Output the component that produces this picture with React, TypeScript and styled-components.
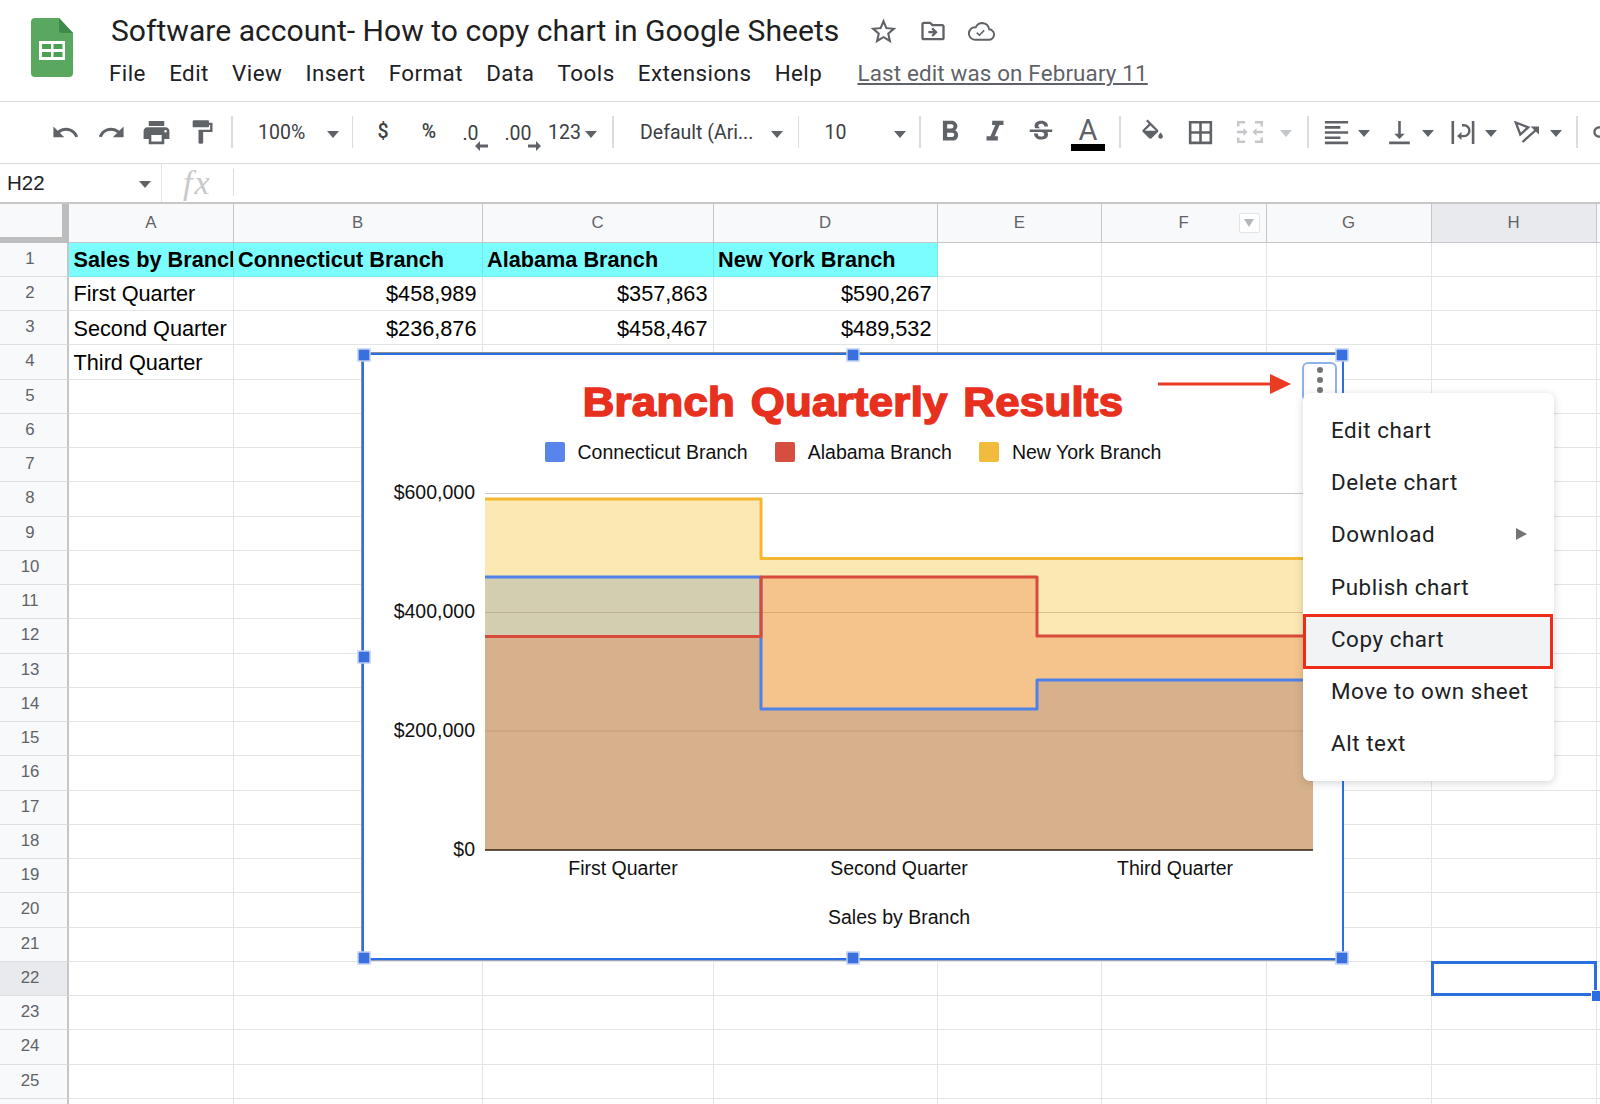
import React from 'react';
import styled, { createGlobalStyle } from 'styled-components';
import {
  MdBorderAll,
  MdFormatAlignLeft,
  MdFormatBold,
  MdFormatItalic,
  MdFormatPaint,
  MdLink,
  MdOutlineDriveFileMove,
  MdPrint,
  MdRedo,
  MdStarBorder,
  MdStrikethroughS,
  MdUndo,
  MdVerticalAlignBottom,
} from 'react-icons/md';

const GlobalStyle = createGlobalStyle`
  html, body {
    margin: 0;
    padding: 0;
    background: #fff;
    overflow: hidden;
  }
  body {
    font-family: "Liberation Sans", Arial, sans-serif;
    color: #000;
  }
`;

const Page = styled.div`
  position: relative;
  width: 1600px;
  height: 1104px;
  overflow: hidden;
  background: #fff;
`;

/* ---------- title bar ---------- */

const TopBar = styled.header`
  box-sizing: border-box;
  height: 101.5px;
  display: flex;
  align-items: flex-start;
  padding: 18px 0 0 31px;
  border-bottom: 1.5px solid #dadce0;
`;

const TitleBlock = styled.div`
  margin-left: 38px;
  display: flex;
  flex-direction: column;
`;

const TitleRow = styled.div`
  display: flex;
  align-items: center;
  height: 26px;
`;

const DocTitle = styled.h1`
  margin: 0;
  font: 400 30.1px/26px "Roboto", sans-serif;
  color: #1f1f1f;
  white-space: nowrap;
`;

const TitleIcons = styled.div`
  display: flex;
  align-items: center;
  margin-left: 29px;
  gap: 20px;
  color: #5f6368;
`;

const MenuRow = styled.nav`
  display: flex;
  align-items: center;
  height: 30px;
  margin: 14px 0 0 -2px;
  gap: 23.2px;
  font: 400 22.4px/30px "Roboto", sans-serif;
  letter-spacing: 0.45px;
  color: #202124;
`;

const LastEdit = styled.a`
  margin-left: 12px;
  color: #5f6368;
  text-decoration: underline;
  letter-spacing: 0.15px;
`;

/* ---------- toolbar ---------- */

const Toolbar = styled.div`
  box-sizing: border-box;
  height: 62px;
  display: flex;
  align-items: center;
  padding-left: 43px;
  border-bottom: 1.5px solid #dadce0;
  color: #5f6368;
  overflow: hidden;
`;

const Slot = styled.div<{ $w: number }>`
  flex: none;
  width: ${p => p.$w}px;
  display: flex;
  align-items: center;
  justify-content: center;
  font: 500 19.5px/26px "Roboto", sans-serif;
  color: #3c4043;
  svg {
    flex: none;
    color: #5f6368;
  }
`;

const Divider = styled.div<{ $w: number }>`
  flex: none;
  width: ${p => p.$w}px;
  height: 32px;
  display: flex;
  justify-content: center;
  &::before {
    content: '';
    width: 1.5px;
    background: #dadce0;
  }
`;

const Dropdown = styled.div<{ $w: number; $pl: number; $pr: number }>`
  flex: none;
  box-sizing: border-box;
  width: ${p => p.$w}px;
  padding: 1px ${p => p.$pr}px 0 ${p => p.$pl}px;
  display: flex;
  align-items: center;
  justify-content: space-between;
  font: 400 19.5px/24px "Roboto", sans-serif;
  color: #3c4043;
  white-space: nowrap;
`;

const Caret = styled.span<{ $muted?: boolean }>`
  flex: none;
  width: 0;
  height: 0;
  margin-top: 3px;
  border-left: 6px solid transparent;
  border-right: 6px solid transparent;
  border-top: 7px solid ${p => (p.$muted ? '#c4c7ca' : '#5f6368')};
`;

const IconGroup = styled.div<{ $gap: number; $ml?: number; $mr?: number }>`
  flex: none;
  display: flex;
  align-items: center;
  gap: ${p => p.$gap}px;
  margin: 0 ${p => p.$mr ?? 0}px 0 ${p => p.$ml ?? 0}px;
  color: #5f6368;
`;

const IconBox = styled.span`
  flex: none;
  width: 24px;
  height: 24px;
  display: flex;
  align-items: center;
  justify-content: center;
  svg {
    flex: none;
  }
`;

const DecimalStack = styled.div`
  display: flex;
  flex-direction: column;
  align-items: flex-end;
  padding-top: 10px;
  font: 400 19.5px/20px "Roboto", sans-serif;
  color: #3c4043;
  svg {
    margin: -3px -9px 0 0;
  }
`;

const ColorA = styled.div`
  display: flex;
  flex-direction: column;
  align-items: center;
  width: 34px;
  font: 400 29px/30px "Roboto", sans-serif;
  color: #5f6368;
  padding-top: 1px;
  &::after {
    content: '';
    width: 34px;
    height: 7px;
    margin-top: -1px;
    background: #000;
  }
`;

/* ---------- formula bar ---------- */

const FormulaBar = styled.div`
  box-sizing: border-box;
  height: 40.5px;
  display: flex;
  align-items: center;
  border-bottom: 2px solid #c8c8c8;
`;

const NameBox = styled.div`
  box-sizing: border-box;
  width: 162px;
  height: 100%;
  padding: 0 10px 0 7px;
  display: flex;
  align-items: center;
  justify-content: space-between;
  font: 400 20.5px/24px "Liberation Sans", sans-serif;
  color: #202124;
  border-right: 1.5px solid #e3e4e6;
`;

const FxLabel = styled.div`
  width: 72px;
  height: 27px;
  box-sizing: border-box;
  padding-left: 21px;
  display: flex;
  align-items: center;
  border-right: 1.5px solid #dadce0;
  font: italic 400 34px/27px "Liberation Serif", serif;
  color: #c9c9c9;
  letter-spacing: 2px;
`;

/* ---------- sheet grid ---------- */

const Sheet = styled.div`
  display: grid;
  grid-template-columns: 69px 164.5px 249px 231px 224px 164.5px 164.5px 165px 165px 1fr;
  grid-template-rows: 38.5px repeat(26, 34.25px);
  height: 900px;
  overflow: hidden;
`;

const Corner = styled.div`
  box-sizing: border-box;
  background: #f8f9fa;
  border-right: 7px solid #bdbdbd;
  border-bottom: 6px solid #bdbdbd;
`;

const ColHead = styled.div<{ $active?: boolean }>`
  position: relative;
  box-sizing: border-box;
  display: flex;
  align-items: center;
  justify-content: center;
  background: ${p => (p.$active ? '#e8eaed' : '#f8f9fa')};
  border-right: 1.5px solid #c4c6c8;
  border-bottom: 1.5px solid #c4c6c8;
  font-size: 16.8px;
  color: #5f6368;
`;

const FilterBadge = styled.span`
  position: absolute;
  right: 6px;
  top: 9px;
  box-sizing: border-box;
  width: 21px;
  height: 20px;
  display: flex;
  align-items: center;
  justify-content: center;
  background: #fff;
  border: 1.5px solid #e3e4e6;
  border-radius: 2px;
  &::before {
    content: '';
    border-left: 5px solid transparent;
    border-right: 5px solid transparent;
    border-top: 8px solid #b4b7ba;
  }
`;

const RowHead = styled.div<{ $active?: boolean }>`
  box-sizing: border-box;
  display: flex;
  align-items: center;
  justify-content: center;
  padding-right: 7px;
  padding-bottom: 1px;
  background: ${p => (p.$active ? '#e8eaed' : '#f8f9fa')};
  border-right: 2px solid #c4c6c8;
  border-bottom: 1.5px solid #dcdddf;
  font-size: 16.8px;
  color: #5f6368;
`;

const Cell = styled.div<{ $right?: boolean; $head?: boolean }>`
  box-sizing: border-box;
  min-width: 0;
  padding: 2px 5px 0 4.5px;
  display: flex;
  align-items: center;
  justify-content: ${p => (p.$right ? 'flex-end' : 'flex-start')};
  overflow: hidden;
  white-space: nowrap;
  font-size: 21.7px;
  font-weight: ${p => (p.$head ? 700 : 400)};
  background: ${p => (p.$head ? '#7cfdfd' : '#fff')};
  border-right: 1.5px solid ${p => (p.$head ? '#72e8e9' : '#e3e4e5')};
  border-bottom: 1.5px solid ${p => (p.$head ? '#72e8e9' : '#e3e4e5')};
`;

const CellSelection = styled.div`
  position: absolute;
  left: 1431px;
  top: 961px;
  box-sizing: border-box;
  width: 166px;
  height: 35px;
  border: 3px solid #2a6fe0;
  &::after {
    content: '';
    position: absolute;
    right: -9px;
    bottom: -9px;
    width: 10px;
    height: 10px;
    background: #2a6fe0;
    border: 1px solid #fff;
  }
`;

/* ---------- chart ---------- */

const ChartFrame = styled.section`
  position: absolute;
  left: 362px;
  top: 353px;
  box-sizing: border-box;
  width: 982px;
  height: 607px;
  padding-top: 22px;
  background: #fff;
  border: 2px solid #2a70e4;
  box-shadow: -1px -1px 0 #8f8f8f, 0 1px 0 #9aa5bd;
`;

const Handle = styled.span<{ $x: number; $y: number }>`
  position: absolute;
  left: ${p => p.$x}%;
  top: ${p => p.$y}%;
  box-sizing: border-box;
  width: 13px;
  height: 13px;
  transform: translate(-50%, -50%);
  background: #3a6fe0;
  border: 1px solid #fff;
`;

const ChartTitle = styled.h2`
  margin: 0;
  height: 50px;
  text-align: center;
  font: 700 41px/50px "Liberation Sans", sans-serif;
  color: #e8301f;
  -webkit-text-stroke: 1.6px #e8301f;
  letter-spacing: 0.3px;
  word-spacing: 3px;
  white-space: nowrap;
  transform: scaleX(1.065);
`;

const Legend = styled.div`
  height: 20px;
  margin-top: 15px;
  display: flex;
  justify-content: center;
  gap: 27px;
  font-size: 19.5px;
  line-height: 20px;
  color: #111;
`;

const LegendItem = styled.div`
  display: flex;
  align-items: center;
  gap: 13px;
`;

const Swatch = styled.span<{ $color: string }>`
  width: 20px;
  height: 20px;
  border-radius: 2px;
  background: ${p => p.$color};
`;

const PlotSvg = styled.svg`
  display: block;
  margin-top: 13px;
  width: 977px;
  height: 482px;
  text {
    font-family: "Liberation Sans", sans-serif;
    font-size: 19.5px;
    fill: #111;
  }
`;

const MoreButton = styled.div`
  position: absolute;
  right: 5px;
  top: 7px;
  box-sizing: border-box;
  width: 35px;
  height: 40px;
  padding-top: 3px;
  display: flex;
  flex-direction: column;
  align-items: center;
  gap: 4px;
  border: 2.5px solid #8fb2ea;
  border-radius: 6px;
  background: #fff;
  span {
    width: 6px;
    height: 6px;
    border-radius: 50%;
    background: #757575;
  }
`;

const RedArrow = styled.svg`
  position: absolute;
  left: 794px;
  top: 17px;
  width: 134px;
  height: 24px;
`;

/* ---------- chart menu ---------- */

const ChartMenu = styled.ul`
  position: absolute;
  left: 1303px;
  top: 393px;
  box-sizing: border-box;
  width: 251px;
  height: 388px;
  margin: 0;
  padding: 11px 0;
  list-style: none;
  background: #fff;
  border-radius: 7px;
  box-shadow: 0 2px 9px rgba(60, 64, 67, 0.22);
  isolation: isolate;
`;

const MenuItem = styled.li<{ $copy?: boolean }>`
  position: relative;
  height: 52.2px;
  padding: 0 27px 0 28px;
  display: flex;
  align-items: center;
  justify-content: space-between;
  font: 400 22.4px/30px "Roboto", sans-serif;
  letter-spacing: 0.55px;
  color: #202124;
  white-space: nowrap;
  ${p =>
    p.$copy &&
    `
    &::before {
      content: '';
      position: absolute;
      z-index: -1;
      inset: 1px 1px -4px 0;
      background: #f1f3f4;
      border: 3px solid #ee2c17;
    }
  `}
`;

const SubArrow = styled.span`
  width: 0;
  height: 0;
  border-top: 6px solid transparent;
  border-bottom: 6px solid transparent;
  border-left: 11px solid #757575;
`;

/* ---------- data ---------- */

const columns = ['A', 'B', 'C', 'D', 'E', 'F', 'G', 'H', ''];

const rows: Record<number, { text: string; right?: boolean; head?: boolean }[]> = {
  1: [
    { text: 'Sales by Branch', head: true },
    { text: 'Connecticut Branch', head: true },
    { text: 'Alabama Branch', head: true },
    { text: 'New York Branch', head: true },
  ],
  2: [
    { text: 'First Quarter' },
    { text: '$458,989', right: true },
    { text: '$357,863', right: true },
    { text: '$590,267', right: true },
  ],
  3: [
    { text: 'Second Quarter' },
    { text: '$236,876', right: true },
    { text: '$458,467', right: true },
    { text: '$489,532', right: true },
  ],
  4: [{ text: 'Third Quarter' }],
};

const PLOT_LEFT = 485;
const PLOT_RIGHT = 1313;
const STEP_A = 761;
const STEP_B = 1037;
const BASE_Y = 850;

const series = [
  { name: 'Connecticut Branch', color: '#4285f4', line: '#4f81e8', swatch: '#5884ec', fill: 0.3, ys: [577, 709, 680] },
  { name: 'Alabama Branch', color: '#db4437', line: '#d84a3b', swatch: '#d64f3e', fill: 0.27, ys: [636.5, 577, 636] },
  { name: 'New York Branch', color: '#f4b400', line: '#f3b733', swatch: '#f3bb3e', fill: 0.3, ys: [499, 558.5, 558.5] },
];

const stepLine = (ys: number[]) =>
  `M${PLOT_LEFT} ${ys[0]}H${STEP_A}V${ys[1]}H${STEP_B}V${ys[2]}H${PLOT_RIGHT}`;

const yTicks = [
  { label: '$600,000', y: 493.5 },
  { label: '$400,000', y: 612.5 },
  { label: '$200,000', y: 731 },
  { label: '$0', y: 850 },
];

const xTicks = [
  { label: 'First Quarter', x: 623 },
  { label: 'Second Quarter', x: 899 },
  { label: 'Third Quarter', x: 1175 },
];

const menuItems = ['Edit chart', 'Delete chart', 'Download', 'Publish chart', 'Copy chart', 'Move to own sheet', 'Alt text'];

const handles = [
  [0, 0],
  [50, 0],
  [100, 0],
  [0, 50],
  [0, 100],
  [50, 100],
  [100, 100],
];

/* ---------- drawn icons ---------- */

const SheetsLogo = () => (
  <svg width="42" height="59" viewBox="0 0 42 59">
    <path d="M4 0h24l14 15v40a4 4 0 0 1-4 4H4a4 4 0 0 1-4-4V4a4 4 0 0 1 4-4z" fill="#5aa85f" />
    <path d="M28 0l14 15H31a3 3 0 0 1-3-3z" fill="#3f8a4a" />
    <path d="M8 23h26v19H8z" fill="#fff" />
    <path d="M11 26h9v5h-9zM22.5 26h9v5h-9zM11 34h9v5h-9zM22.5 34h9v5h-9z" fill="#4ba052" />
  </svg>
);

const CloudCheck = () => (
  <svg width="28" height="20" viewBox="0 0 28 20" fill="none" stroke="#5f6368" strokeWidth="1.9">
    <path d="M8 18.7h13.5a5.2 5.2 0 0 0 .7-10.4A7.6 7.6 0 0 0 15.3 2c-3 0-5.4 1.7-6.5 4.3h-.6a6.2 6.2 0 0 0-.2 12.4z" />
    <path d="M9.8 11.6l2.6 2.6 4.8-4.8" strokeWidth="1.6" />
  </svg>
);

const ArrowGlyph = ({ left }: { left?: boolean }) => (
  <svg width="13" height="10" viewBox="0 0 13 10" fill="#5f6368">
    <path d={left ? 'M0 5l5-5v3.6h8v2.8H5V10z' : 'M13 5L8 0v3.6H0v2.8h8V10z'} />
  </svg>
);

const MergeIcon = () => (
  <svg width="26" height="22" viewBox="0 0 26 22" fill="#c4c7ca">
    <path d="M0 0h8v2.5H2.5v3H0zM18 0h8v5.5h-2.5v-3H18zM0 16.5h2.5v3H8V22H0zM23.5 16.5H26V22h-8v-2.5h5.5z" />
    <path d="M0 9.8h6.5V7l4 4-4 4v-2.8H0zM26 9.8h-6.5V7l-4 4 4 4v-2.8H26z" />
  </svg>
);

const WrapIcon = () => (
  <svg width="24" height="23" viewBox="0 0 24 23" fill="#5f6368">
    <path d="M0.5 0h2.6v23H0.5zM20.8 0h2.6v23h-2.6z" />
    <path d="M11 5.5h2a4.2 4.2 0 0 1 0 8.4h-2.5V11L6 15l4.5 4v-2.7H13a6.6 6.6 0 0 0 0-13.2h-2z" />
  </svg>
);

const RotateIcon = () => (
  <svg width="26" height="22" viewBox="0 0 26 22" fill="none" stroke="#5f6368" strokeWidth="2.3">
    <path d="M1.8 1.5l4.5 12 8-7.2z" />
    <path d="M8.5 21L23 8" />
    <path d="M16.5 5.5H25v8z" fill="#5f6368" stroke="none" />
  </svg>
);

const FillIcon = () => (
  <svg width="25" height="26" viewBox="0 0 22 22" fill="#5f6368">
    <path d="M16.56 8.94L7.62 0 6.21 1.41l2.38 2.38-5.15 5.15c-.59.59-.59 1.54 0 2.12l5.5 5.5c.29.29.68.44 1.06.44s.77-.15 1.06-.44l5.5-5.5c.59-.58.59-1.53 0-2.12zM5.21 10L10 5.21 14.79 10H5.21zM19 11.5s-2 2.17-2 3.5c0 1.1.9 2 2 2s2-.9 2-2c0-1.33-2-3.5-2-3.5z" />
  </svg>
);

/* ---------- page ---------- */

const App = () => (
  <Page>
    <GlobalStyle />

    <TopBar>
      <SheetsLogo />
      <TitleBlock>
        <TitleRow>
          <DocTitle>Software account- How to copy chart in Google Sheets</DocTitle>
          <TitleIcons>
            <MdStarBorder size={31} />
            <MdOutlineDriveFileMove size={28} />
            <CloudCheck />
          </TitleIcons>
        </TitleRow>
        <MenuRow>
          {['File', 'Edit', 'View', 'Insert', 'Format', 'Data', 'Tools', 'Extensions', 'Help'].map(item => (
            <span key={item}>{item}</span>
          ))}
          <LastEdit>Last edit was on February 11</LastEdit>
        </MenuRow>
      </TitleBlock>
    </TopBar>

    <Toolbar>
      <Slot $w={45}><MdUndo size={29} /></Slot>
      <Slot $w={46}><MdRedo size={29} /></Slot>
      <Slot $w={45}><MdPrint size={31} /></Slot>
      <Slot $w={46}><MdFormatPaint size={28} /></Slot>
      <Divider $w={14} />
      <Dropdown $w={107} $pl={19} $pr={7.5}>100%<Caret /></Dropdown>
      <Divider $w={13} />
      <Slot $w={48}>$</Slot>
      <Slot $w={44}>%</Slot>
      <Slot $w={39}>
        <DecimalStack>.0<ArrowGlyph left /></DecimalStack>
      </Slot>
      <Slot $w={56}>
        <DecimalStack>.00<ArrowGlyph /></DecimalStack>
      </Slot>
      <Dropdown $w={60} $pl={2} $pr={9}>123<Caret /></Dropdown>
      <Divider $w={14} />
      <Dropdown $w={172} $pl={20} $pr={9}>Default (Ari...<Caret /></Dropdown>
      <Divider $w={13} />
      <Dropdown $w={108} $pl={19.5} $pr={7.5}>10<Caret /></Dropdown>
      <Divider $w={14} />
      <Slot $w={45}><MdFormatBold size={34} /></Slot>
      <Slot $w={46}><MdFormatItalic size={34} /></Slot>
      <Slot $w={46}><MdStrikethroughS size={30} /></Slot>
      <Slot $w={48}><ColorA>A</ColorA></Slot>
      <Divider $w={16} />
      <Slot $w={47}><FillIcon /></Slot>
      <Slot $w={51}><MdBorderAll size={31} /></Slot>
      <IconGroup $gap={18} $ml={12}>
        <IconBox><MergeIcon /></IconBox>
        <Caret $muted />
      </IconGroup>
      <Divider $w={32} />
      <IconGroup $gap={10} $mr={17.5}>
        <IconBox><MdFormatAlignLeft size={31} /></IconBox>
        <Caret />
      </IconGroup>
      <IconGroup $gap={10} $mr={17.5}>
        <IconBox><MdVerticalAlignBottom size={31} /></IconBox>
        <Caret />
      </IconGroup>
      <IconGroup $gap={10} $mr={17.5}>
        <IconBox><WrapIcon /></IconBox>
        <Caret />
      </IconGroup>
      <IconGroup $gap={11}>
        <IconBox><RotateIcon /></IconBox>
        <Caret />
      </IconGroup>
      <Divider $w={31} />
      <IconBox><MdLink size={28} /></IconBox>
    </Toolbar>

    <FormulaBar>
      <NameBox>H22<Caret /></NameBox>
      <FxLabel>fx</FxLabel>
    </FormulaBar>

    <Sheet>
      <Corner />
      {columns.map((col, i) => (
        <ColHead key={i} $active={col === 'H'}>
          {col}
          {col === 'F' && <FilterBadge />}
        </ColHead>
      ))}
      {Array.from({ length: 26 }, (_, r) => r + 1).map(row => (
        <React.Fragment key={row}>
          <RowHead $active={row === 22}>{row < 26 ? row : ''}</RowHead>
          {columns.map((_, c) => {
            const cell = rows[row]?.[c];
            return (
              <Cell key={c} $right={cell?.right} $head={cell?.head}>
                {cell?.text}
              </Cell>
            );
          })}
        </React.Fragment>
      ))}
    </Sheet>

    <CellSelection />

    <ChartFrame>
      <ChartTitle>Branch Quarterly Results</ChartTitle>
      <Legend>
        {series.map(s => (
          <LegendItem key={s.name}>
            <Swatch $color={s.swatch} />
            {s.name}
          </LegendItem>
        ))}
      </Legend>
      <PlotSvg viewBox="364 475 977 482">
        {yTicks.slice(0, 3).map(t => (
          <line key={t.label} x1={PLOT_LEFT} x2={PLOT_RIGHT} y1={t.y} y2={t.y} stroke="#c8c8c8" strokeWidth="1.2" />
        ))}
        {series.map(s => (
          <path
            key={s.name}
            d={`${stepLine(s.ys)}V${BASE_Y}H${PLOT_LEFT}Z`}
            fill={s.color}
            fillOpacity={s.fill}
          />
        ))}
        {series.map(s => (
          <path
            key={s.name}
            d={stepLine(s.ys)}
            fill="none"
            stroke={s.line}
            strokeWidth="3"
            strokeLinejoin="round"
          />
        ))}
        <line x1={PLOT_LEFT} x2={PLOT_RIGHT} y1={BASE_Y} y2={BASE_Y} stroke="#33210f" strokeWidth="1.5" />
        {yTicks.map(t => (
          <text key={t.label} x="475" y={t.y + 5.5} textAnchor="end">
            {t.label}
          </text>
        ))}
        {xTicks.map(t => (
          <text key={t.label} x={t.x} y="874.5" textAnchor="middle">
            {t.label}
          </text>
        ))}
        <text x="899" y="924" textAnchor="middle">Sales by Branch</text>
      </PlotSvg>
      <RedArrow viewBox="0 0 134 24">
        <path d="M0 10.5h112v3H0z" fill="#e93c23" />
        <path d="M112 2l21 10-21 10z" fill="#e93c23" />
      </RedArrow>
      <MoreButton>
        <span />
        <span />
        <span />
      </MoreButton>
      {handles.map(([x, y]) => (
        <Handle key={`${x}-${y}`} $x={x} $y={y} />
      ))}
    </ChartFrame>

    <ChartMenu>
      {menuItems.map(item => (
        <MenuItem key={item} $copy={item === 'Copy chart'}>
          {item}
          {item === 'Download' && <SubArrow />}
        </MenuItem>
      ))}
    </ChartMenu>
  </Page>
);

export default App;
